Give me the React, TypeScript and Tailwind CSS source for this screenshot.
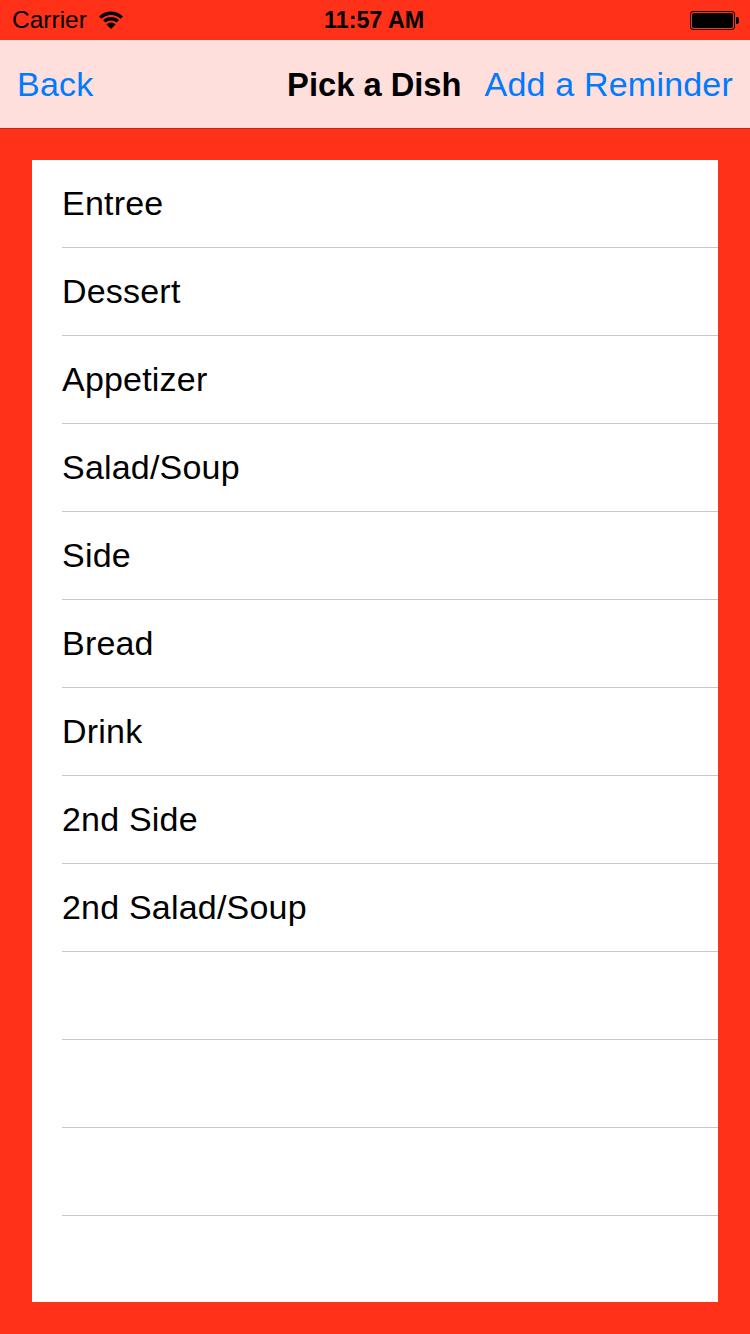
const ROWS = ["Entree", "Dessert", "Appetizer", "Salad/Soup", "Side", "Bread", "Drink", "2nd Side", "2nd Salad/Soup", "", "", ""];

function WifiIcon() {
  return (
    <svg width="24" height="18" viewBox="0 0 24 18" className="ml-[12px]">
      <path d="M1.2 6.6 A15.5 15.5 0 0 1 22.8 6.6" fill="none" stroke="#000" strokeWidth="3.4" />
      <path d="M5.3 10.4 A9.6 9.6 0 0 1 18.7 10.4" fill="none" stroke="#000" strokeWidth="3.4" />
      <path d="M7.4 13.4 A6.6 6.6 0 0 1 16.6 13.4 L12 18 Z" fill="#000" />
    </svg>
  );
}

function Battery() {
  return (
    <div className="flex items-center">
      <div className="h-[19px] w-[45px] rounded-[3px] border border-black bg-[#ff3219] p-px">
        <div className="h-full w-full rounded-[2px] bg-black" />
      </div>
      <div className="ml-px h-[7px] w-[3px] rounded-r-[2px] bg-black" />
    </div>
  );
}

export default function App() {
  return (
    <div className="flex h-[1334px] w-[750px] flex-col bg-[#ff3219] font-['Liberation_Sans',Arial,sans-serif] text-black">
      <div className="relative flex h-10 shrink-0 items-center justify-between pl-3 pr-[11px]">
        <div className="flex items-center">
          <span className="text-[24.5px] leading-none">Carrier</span>
          <WifiIcon />
        </div>
        <span className="absolute left-[324px] top-[9px] text-[23.3px] font-bold leading-none">11:57 AM</span>
        <Battery />
      </div>

      <div className="flex h-[89px] shrink-0 items-center justify-between border-b border-[#c2281a] bg-[#ffdfdc] px-[17px] text-[34px] tracking-[0.2px] text-[#007aff]">
        <span>Back</span>
        <div className="flex items-baseline gap-[23px]">
          <span className="text-[32.7px] font-bold tracking-normal text-black">Pick a Dish</span>
          <span>Add a Reminder</span>
        </div>
      </div>

      <div className="mx-8 mt-[31px] h-[1142px] overflow-hidden bg-white">
        {ROWS.map((label, i) => (
          <div key={i} className="h-[88px] pl-[30px]">
            <div className="flex h-full items-center border-b border-[#c8c7cc] pb-[1px] text-[34px] leading-none tracking-[0.2px]">
              {label}
            </div>
          </div>
        ))}
      </div>
    </div>
  );
}
